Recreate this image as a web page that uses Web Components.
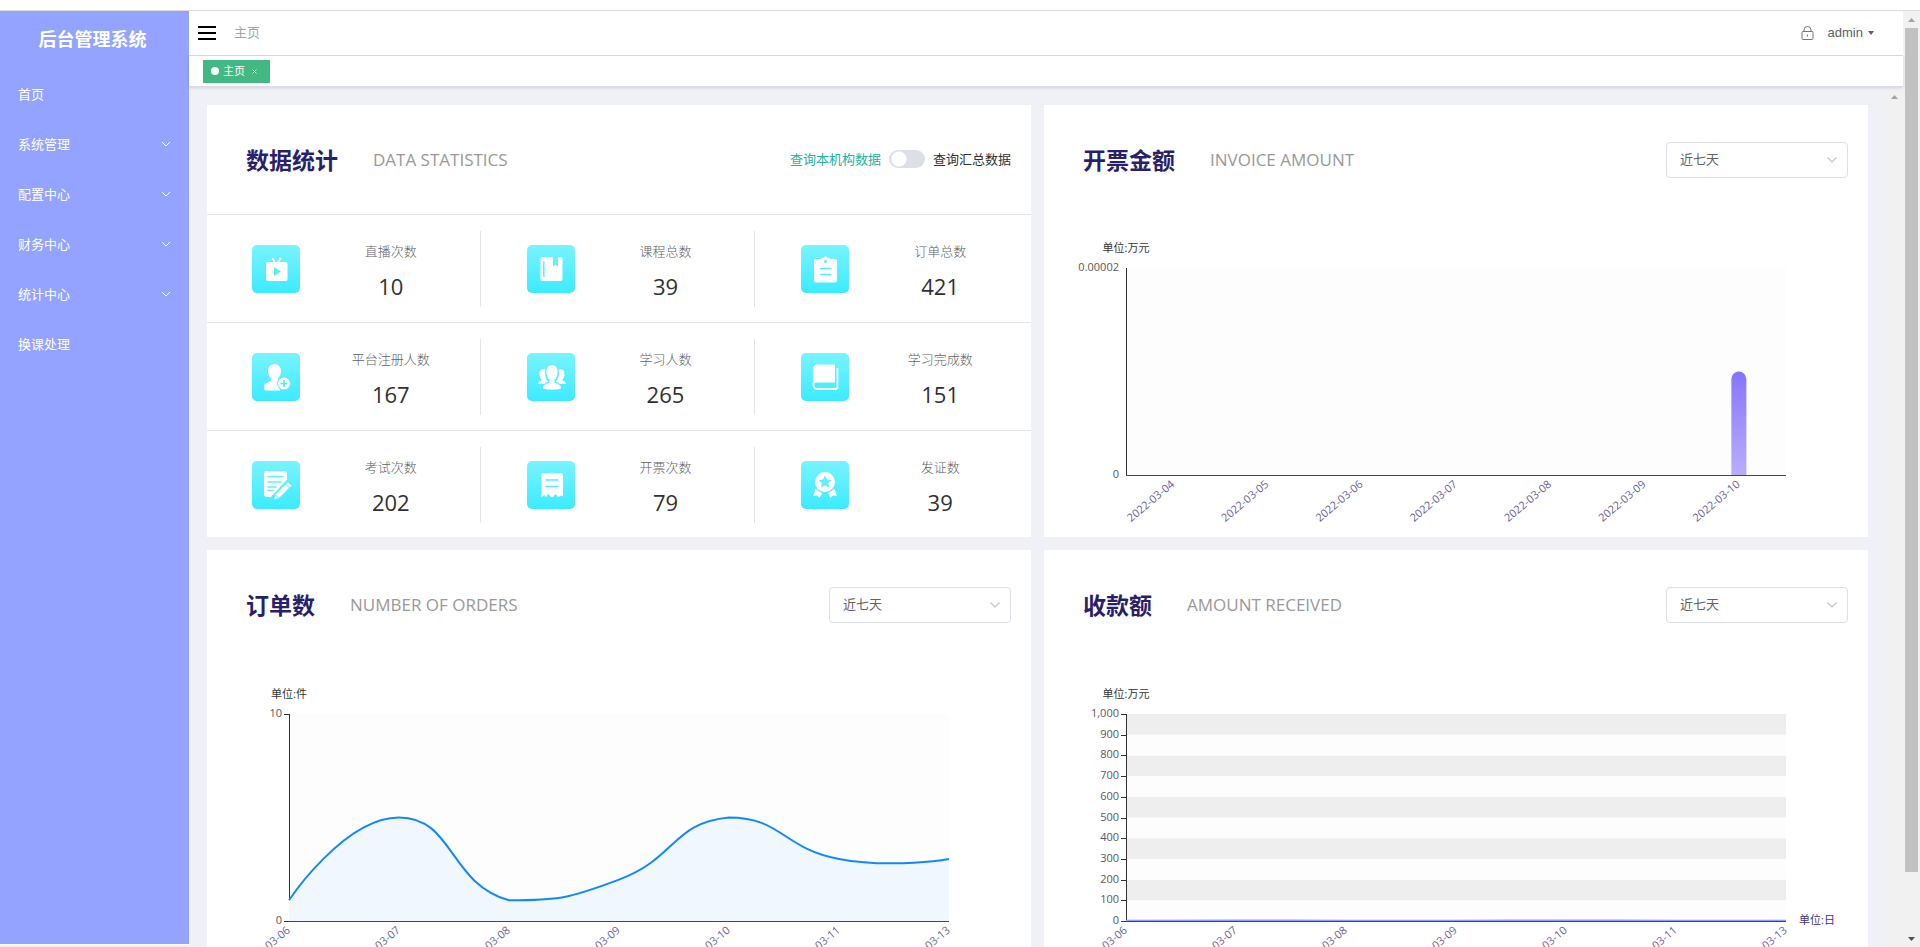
<!DOCTYPE html>
<html lang="zh-CN">
<head>
<meta charset="utf-8">
<title>后台管理系统</title>
<style>
  html, body { height: 100%; }
  body {
    margin: 0;
    overflow: hidden;
    background: #fff;
    color: #303133;
    font: 13px/20px "Open Sans", "Noto Sans CJK SC", sans-serif;
  }
</style>
</head>
<body>
<admin-app>
  <side-menu slot="side" heading="后台管理系统">
    <menu-entry>首页</menu-entry>
    <menu-entry expandable>系统管理</menu-entry>
    <menu-entry expandable>配置中心</menu-entry>
    <menu-entry expandable>财务中心</menu-entry>
    <menu-entry expandable>统计中心</menu-entry>
    <menu-entry>换课处理</menu-entry>
  </side-menu>
  <top-bar slot="top" user="admin">主页</top-bar>
  <tab-strip slot="tabs"><tab-chip>主页</tab-chip></tab-strip>

  <panel-card heading="数据统计" sub="DATA STATISTICS">
    <scope-switch slot="tools"></scope-switch>
    <stat-grid>
      <stat-cell icon="live" label="直播次数">10</stat-cell>
      <stat-cell icon="course" label="课程总数">39</stat-cell>
      <stat-cell icon="order" label="订单总数">421</stat-cell>
      <stat-cell icon="register" label="平台注册人数">167</stat-cell>
      <stat-cell icon="group" label="学习人数">265</stat-cell>
      <stat-cell icon="book" label="学习完成数">151</stat-cell>
      <stat-cell icon="exam" label="考试次数">202</stat-cell>
      <stat-cell icon="receipt" label="开票次数">79</stat-cell>
      <stat-cell icon="medal" label="发证数">39</stat-cell>
    </stat-grid>
  </panel-card>

  <panel-card heading="开票金额" sub="INVOICE AMOUNT">
    <range-select slot="tools"></range-select>
    <axis-chart type="bar" unit="单位:万元" max="0.00002" step="0.00002"
      labels="2022-03-04,2022-03-05,2022-03-06,2022-03-07,2022-03-08,2022-03-09,2022-03-10"
      values="0,0,0,0,0,0,0.00001"></axis-chart>
  </panel-card>

  <panel-card heading="订单数" sub="NUMBER OF ORDERS">
    <range-select slot="tools"></range-select>
    <axis-chart type="line" unit="单位:件" max="10" step="10" ticks stroke="#1089ff" fill="#f0f7ff"
      labels="03-06,03-07,03-08,03-09,03-10,03-11,03-13"
      values="1,5,1,2,5,3,3"></axis-chart>
  </panel-card>

  <panel-card heading="收款额" sub="AMOUNT RECEIVED">
    <range-select slot="tools"></range-select>
    <axis-chart type="line" unit="单位:万元" xunit="单位:日" max="1000" step="100" ticks stroke="#8c9dff" fill="#dfe4ff"
      labels="03-06,03-07,03-08,03-09,03-10,03-11,03-13"
      values="1,3,1,1,3,1,1"></axis-chart>
  </panel-card>
</admin-app>

<script>
function define(name, html, setup) {
  const template = document.createElement('template');
  template.innerHTML = html;
  customElements.define(name, class extends HTMLElement {
    connectedCallback() {
      if (this.shadowRoot) return;
      const root = this.attachShadow({ mode: 'open' });
      root.append(template.content.cloneNode(true));
      if (setup) setup(this, root);
    }
  });
}

define('admin-app', `
  <style>
    :host { display: flex; flex-direction: column; height: 100vh; overflow: hidden; }
    .edge { flex: none; height: 10px; border-bottom: 1px solid #dcdcdc; }
    .body { flex: 1; min-height: 0; display: flex; }
    .main { flex: 1; min-width: 0; display: flex; flex-direction: column; }
    .scroll { flex: 1; min-height: 0; display: flex; background: #f0f1f6; }
    .cards {
      flex: 1; min-width: 0; overflow: hidden; padding: 18px 17px 0 18px;
      display: grid; grid-template-columns: 1fr 1fr; grid-auto-rows: 432px; gap: 13px;
    }
    .side { flex: none; display: flex; flex-direction: column; width: 189px; }
    .side ::slotted(*) { flex: 1; }
    .track { flex: none; height: 2px; margin-top: 1px; background: #f1f1f1; }
  </style>
  <div class="edge"></div>
  <div class="body">
    <div class="side"><slot name="side"></slot><div class="track"></div></div>
    <div class="main">
      <slot name="top"></slot>
      <slot name="tabs"></slot>
      <div class="scroll">
        <main class="cards"><slot></slot></main>
        <scroll-rail wide></scroll-rail>
      </div>
    </div>
    <scroll-rail thumb></scroll-rail>
  </div>`);

define('scroll-rail', `
  <style>
    :host { flex: none; display: flex; flex-direction: column; align-items: center; width: 17px; background: #f1f1f1; }
    :host([wide]) { width: 18px; }
    svg { display: block; flex: none; width: 17px; height: 17px; }
    i { display: none; flex: 1; width: 13px; }
    :host([thumb]) i { display: block; background: linear-gradient(#c1c1c1 93.6%, transparent 0); }
    :host(:not([thumb])) .down { display: none; }
    :host([wide]) svg { margin-top: 1px; }
  </style>
  <svg viewBox="0 0 17 17"><path d="M5 11l3.500-4L12 11z" fill="#a3a3a3"/></svg>
  <i></i>
  <svg class="down" viewBox="0 0 17 17"><path d="M5 7h7l-3.500 4z" fill="#505050"/></svg>`);

define('side-menu', `
  <style>
    :host { display: block; background: #93a3ff; color: #fff; overflow: hidden; }
    h1 { margin: 8px 4px 10px 0; font-size: 18px; line-height: 40px; font-weight: 700; text-align: center; }
  </style>
  <h1></h1><nav><slot></slot></nav>`,
  (el, root) => { root.querySelector('h1').textContent = el.getAttribute('heading'); });

define('menu-entry', `
  <style>
    :host { display: block; }
    a { display: flex; align-items: center; justify-content: space-between; height: 50px; padding: 0 18px; color: #fff; text-decoration: none; }
    svg { display: none; width: 10px; height: 10px; }
    :host([expandable]) svg { display: block; }
  </style>
  <a href="#"><span><slot></slot></span>
    <svg viewBox="0 0 10 10"><path d="M1 3l4 4 4-4" fill="none" stroke="#fff"/></svg></a>`);

define('top-bar', `
  <style>
    :host { flex: none; display: flex; align-items: center; height: 44px; border-bottom: 1px solid #d8dce5; padding: 0 29px 0 9px; background: #fff; }
    button { all: unset; display: flex; align-items: center; cursor: pointer; }
    svg { display: block; }
    nav { margin-left: 18px; padding-bottom: 2px; flex: 1; color: #97a8be; }
    .lock { margin-right: 13px; }
    .user { gap: 5px; color: #5a5e66; font: 13px/20px "Liberation Sans", sans-serif; }
  </style>
  <button aria-label="折叠菜单"><svg width="18" height="14" viewBox="0 0 18 14"><path d="M0 1h18M0 7h18M0 13h18" stroke="#000" stroke-width="2"/></svg></button>
  <nav><slot></slot></nav>
  <button class="lock" aria-label="锁屏"><svg width="14" height="14" viewBox="0 0 14 14" fill="none" stroke="#777"><rect x="1" y="5.500" width="11" height="8" rx="1"/><path d="M3 5.500V4a3.500 3.500 0 0 1 7 0v1.500M6.500 8.500v2"/></svg></button>
  <button class="user"><span></span><svg width="6" height="4" viewBox="0 0 6 4"><path d="M0 0h6L3 4z" fill="#5a5e66"/></svg></button>`,
  (el, root) => { root.querySelector('.user span').textContent = el.getAttribute('user'); });

define('tab-strip', `
  <style>
    :host { flex: none; position: relative; display: flex; align-items: center; height: 30px; padding: 0 14px; background: #fff; border-bottom: 1px solid #d8dce5; box-shadow: 0 1px 3px rgba(0, 0, 0, .12); }
  </style><slot></slot>`);

define('tab-chip', `
  <style>
    :host { display: flex; align-items: center; height: 23px; padding: 0 13px 0 8px; background: #42b983; color: #fff; font-size: 11px; }
    i { width: 8px; height: 8px; margin-right: 4px; border-radius: 50%; background: #fff; }
    button { all: unset; margin-left: 7px; width: 5px; cursor: pointer; }
    svg { display: block; }
  </style>
  <i></i><slot></slot>
  <button aria-label="关闭"><svg width="5" height="5" viewBox="0 0 5 5"><path d="M.5.5l4 4M4.500.5l-4 4" stroke="#fff" stroke-width=".8"/></svg></button>`);

define('panel-card', `
  <style>
    :host { display: block; min-width: 0; background: #fff; overflow: hidden; }
    header { display: flex; align-items: center; height: 109px; padding: 0 20px 0 39px; }
    h2 { margin: 0; font-size: 23px; line-height: 36px; font-weight: 700; color: #2a1f6b; }
    p { flex: 1; margin: 0 0 0 35px; font-size: 17px; line-height: 24px; color: #999; }
  </style>
  <header><h2></h2><p></p><slot name="tools"></slot></header>
  <slot></slot>`,
  (el, root) => {
    root.querySelector('h2').textContent = el.getAttribute('heading');
    root.querySelector('p').textContent = el.getAttribute('sub');
  });

define('scope-switch', `
  <style>
    :host { display: block; padding-bottom: 2px; }
    label { display: flex; align-items: center; color: #303133; }
    .own { color: #20b2a0; }
    input { appearance: none; margin: 0 8px; width: 36px; height: 18px; border-radius: 9px;
      background: radial-gradient(circle at 10px 9px, #fff 7px, transparent 8px) #dcdfe6; }
  </style>
  <label><span class="own">查询本机构数据</span><input type="checkbox" role="switch"><span>查询汇总数据</span></label>`);

define('range-select', `
  <style>
    :host { display: grid; width: 182px; align-items: center; }
    select, svg { grid-area: 1 / 1; }
    select { appearance: none; box-sizing: border-box; width: 100%; height: 36px; padding: 0 13px 2px; border: 1px solid #dcdfe6; border-radius: 4px; background: #fff; color: #606266; font: inherit; }
    svg { justify-self: end; margin-right: 10px; pointer-events: none; }
  </style>
  <select aria-label="时间范围"><option>近七天</option><option>近一个月</option></select>
  <svg width="12" height="12" viewBox="0 0 12 12"><path d="M1.500 3.500L6 8l4.500-4.500" fill="none" stroke="#c0c4cc" stroke-width="1.200"/></svg>`);

define('stat-grid', `
  <style>
    :host { display: grid; grid-template-columns: repeat(3, 1fr); grid-auto-rows: 108px; }
  </style><slot></slot>`);

/* White glyphs on a 48 x 48 tile */
const STAT_ICONS = {
  live: '<path d="M20.500 13l2.500 5M28.500 13l-2.500 5" stroke="#fff" stroke-width="1.800"/><rect x="14" y="17" width="21.500" height="19" rx="2"/><path class="cut" d="M22 22v9l7-4.500z"/>',
  course: '<path d="M15.500 12H26v9.500l2.500-2 2.500 2V12h2.500q2 0 2 2v20q0 2-2 2h-18q-2 0-2-2V14q0-2 2-2z"/><path d="M16.800 16v16" stroke="#5cefff" stroke-width="1.500"/>',
  order: '<path d="M15 14h4.500q1-1.500 3-1.500a2.500 2.500 0 0 1 4 0q2 0 3 1.500H34q2 0 2 2v19.500q0 2-2 2H15q-2 0-2-2V16q0-2 2-2z"/><circle class="cut" cx="24.500" cy="16.500" r="1.600"/><path d="M19 23.500h11.500M19 29.500h11.500" stroke="#56eeff" stroke-width="1.500"/>',
  register: '<path d="M22.500 11c4 0 6.500 3 6.500 7 0 3-1.500 6-3 7.500v2l4 1.500c-3.500 2-4 5.500-1.500 8.500H14q-2 0-2-2v-2c0-2.500 2-3.500 4.500-4.500q2.500-1 2.500-1.500v-2c-1.500-1.500-3-4.500-3-7.500 0-4 2.500-7 6.500-7z"/><circle cx="32" cy="30.500" r="6.500" stroke="#52eeff" stroke-width="1"/><path d="M28.500 30.500h7M32 27v7" stroke="#48ebff" stroke-width="1.600"/>',
  group: '<path d="M17 16c-4 0-4.500 3-4.500 5.500 0 2.500 1 4 2 5v1c-2 1-3.500 1.500-3.500 3.500h6.500c1-1.500 2.500-2 3.500-2.500-3-4-4-8-2.500-12zM33 16c4 0 4.500 3 4.500 5.500 0 2.500-1 4-2 5v1c2 1 3.500 1.500 3.500 3.500h-6.500c-1-1.500-2.500-2-3.500-2.500 3-4 4-8 2.500-12z"/><path d="M25 12c4 0 5.500 3 5.500 7 0 3.500-1 6-3 7.500v3c2 1 6.500 2 6.500 5.500 0 1-4 1.500-9 1.500s-9-.5-9-1.500c0-3.500 4.500-4.500 6.500-5.500v-3c-2-1.500-3-4-3-7.500 0-4 1.500-7 5.500-7z"/>',
  book: '<path d="M17 11.500h17v18H16q-2.500 0-4 2V16.500q0-5 5-5z"/><path d="M12.500 30v2q0 4 4 4h18q2 0 2-2V15" fill="none" stroke="#fff" stroke-width="1.800"/>',
  exam: '<path d="M14 10h18q3 0 3 3v5.500L19 36h-4q-3 0-3-3V12q0-2 2-2z"/><path d="M16 15.500h15M16 21h13M16 26h8M16 29.500h5" stroke="#60f0ff" stroke-width="1.600" stroke-linecap="round"/><path d="M36 20.500l4 4-13 13-5.500 1.500 1.500-5.500z" stroke="#50edff"/><path d="M33.500 23l4 4M23 33.500l4 4" stroke="#50edff"/>',
  receipt: '<path d="M16 12h18q2 0 2 2v21.500l-2-1-3 1.500-2.500-3-2.500 3h-2l-2.500-3-2.500 3-2-2-2 2-.5-.5V14q0-2 2-2z"/><path d="M19 19h12M19 25.500h12" stroke="#58eeff" stroke-width="1.600" stroke-linecap="round"/>',
  medal: '<circle cx="24" cy="21" r="10"/><path d="M24 14.500l2 4 4.500.5-3.200 3 .8 4.500-4.100-2-4.100 2 .8-4.500-3.200-3 4.500-.5z" fill="#60f0ff"/><path d="M14.500 28l6.500 4-2.500 5-2.500-2.500-4 .5zM33.500 28l-6.500 4 2.500 5 2.500-2.500 4 .5z"/>'
};

define('stat-cell', `
  <style>
    :host { box-sizing: border-box; display: flex; align-items: center; min-width: 0; border-top: 1px solid #e4e4e4; }
    .tile { flex: none; width: 48px; height: 48px; margin-left: 45px; border-radius: 5px; background: linear-gradient(#78f3ff, #3cebff); }
    .tile svg { display: block; fill: #fff; }
    .cut { fill: #56eeff; }
    .text { flex: 1; box-sizing: border-box; height: 76px; padding: 10px 0 0 2px; margin-right: 1px; border-right: 1px solid #e4e4e4; text-align: center; }
    :host(:nth-child(3n)) .text { border-right-color: transparent; }
    .label { color: #606266; font-weight: 300; margin-bottom: 10px; }
    .value { font-size: 22px; line-height: 30px; color: #303133; }
  </style>
  <div class="tile"></div>
  <div class="text"><div class="label"></div><div class="value"><slot></slot></div></div>`,
  (el, root) => {
    root.querySelector('.tile').innerHTML = `<svg width="48" height="48" viewBox="0 0 48 48">${STAT_ICONS[el.getAttribute('icon')]}</svg>`;
    root.querySelector('.label').textContent = el.getAttribute('label');
  });

/* Bar or smoothed line chart; the plot takes the middle 80% of the width */
const PLOT_TOP = 54, PLOT_HEIGHT = 207, CHART_HEIGHT = 322, SMOOTH = 0.5;

function smoothPath(points) {
  const ys = points.map(p => p[1]), low = Math.min(...ys), high = Math.max(...ys);
  const clamp = y => Math.min(high, Math.max(low, y));
  const dist = (a, b) => Math.hypot(a[0] - b[0], a[1] - b[1]);
  const handles = points.map((p, i) => {
    const prev = points[i - 1], next = points[i + 1];
    if (!prev || !next) return [p, p];
    const vx = (next[0] - prev[0]) * SMOOTH, vy = (next[1] - prev[1]) * SMOOTH;
    const before = dist(p, prev), after = dist(p, next);
    const a = before / (before + after), b = after / (before + after);
    return [[p[0] - vx * a, clamp(p[1] - vy * a)], [p[0] + vx * b, clamp(p[1] + vy * b)]];
  });
  return points.slice(1).reduce(
    (d, p, i) => `${d}C${handles[i][1]} ${handles[i + 1][0]} ${p}`, `M${points[0]}`);
}

define('axis-chart', `
  <style>
    :host { display: block; height: ${CHART_HEIGHT}px; }
    svg { display: block; width: 100%; height: 100%; }
    text { font-size: 11px; fill: #595959; dominant-baseline: central; }
    .unit { fill: #333; text-anchor: middle; }
    .value { text-anchor: end; }
    .date { text-anchor: end; fill: #6a5fa0; }
    .xunit { fill: #3d3479; }
  </style><svg></svg>`,
  (el, root) => {
    const svg = root.querySelector('svg');
    const get = name => el.getAttribute(name);
    const labels = get('labels').split(','), values = get('values').split(',').map(Number);
    const max = Number(get('max')), step = Number(get('step'));
    const isBar = get('type') === 'bar', ticks = el.hasAttribute('ticks');
    const top = PLOT_TOP + (isBar ? 0 : 1), bottom = top + PLOT_HEIGHT;

    const draw = () => {
      const width = el.clientWidth;
      const left = Math.round(width / 10), right = Math.round(width * 0.9);
      const span = right - left, count = Math.round(max / step);
      const y = v => bottom - v / max * PLOT_HEIGHT;
      const x = i => isBar ? left + span * (i + 0.5) / labels.length : left + span * i / (labels.length - 1);
      let bands = '', axis = '', marks = '', series = '';

      for (let i = 0; i <= count; i++) {
        const value = i * step, line = Math.round(y(value)) + 0.5;
        if (i < count) {
          const bandTop = y(value + step);
          bands += `<rect x="${left}" y="${bandTop}" width="${span}" height="${y(value) - bandTop}" fill="${i % 2 ? '#eee' : '#fdfdfd'}"/>`;
        }
        const shown = value && value < 1 ? value.toFixed(5) : value.toLocaleString('en-US');
        marks += `<text class="value" x="${left - 7}" y="${line - 2}">${shown}</text>`;
        if (ticks) axis += `<path d="M${left - 5} ${line}H${left}" stroke="#333"/>`;
      }
      labels.forEach((label, i) => {
        marks += `<text class="date" transform="translate(${x(i) - 1} ${bottom + 7}) rotate(-40)">${label}</text>`;
      });
      if (isBar) {
        values.forEach((v, i) => {
          if (v) series += `<path d="M${x(i) - 7.5} ${bottom}V${y(v) + 7.5}a7.500 7.500 0 0 1 15 0V${bottom}z" fill="url(#bar)"/>`;
        });
      } else {
        const path = smoothPath(values.map((v, i) => [x(i), y(v)]));
        series = `<path d="${path}V${bottom}H${left}z" fill="${get('fill')}"/><path d="${path}" fill="none" stroke="${get('stroke')}" stroke-width="2"/>`;
      }
      svg.innerHTML = `
        <defs><linearGradient id="bar" x1="0" y1="0" x2="0" y2="1"><stop stop-color="#8774ff"/><stop offset="1" stop-color="#b9adff"/></linearGradient></defs>
        ${bands}
        <path d="M${left + 0.5} ${top}V${bottom}" stroke="#333"/>
        ${axis}${series}
        <path d="M${left} ${bottom + 0.5}H${right}" stroke="#463c80"/>
        <text class="unit" x="${left}" y="${top - 21}">${get('unit')}</text>
        ${marks}
        ${get('xunit') ? `<text class="xunit" x="${right + 13}" y="${bottom - 2}">${get('xunit')}</text>` : ''}`;
    };
    draw();
    new ResizeObserver(draw).observe(el);
  });
</script>
</body>
</html>
